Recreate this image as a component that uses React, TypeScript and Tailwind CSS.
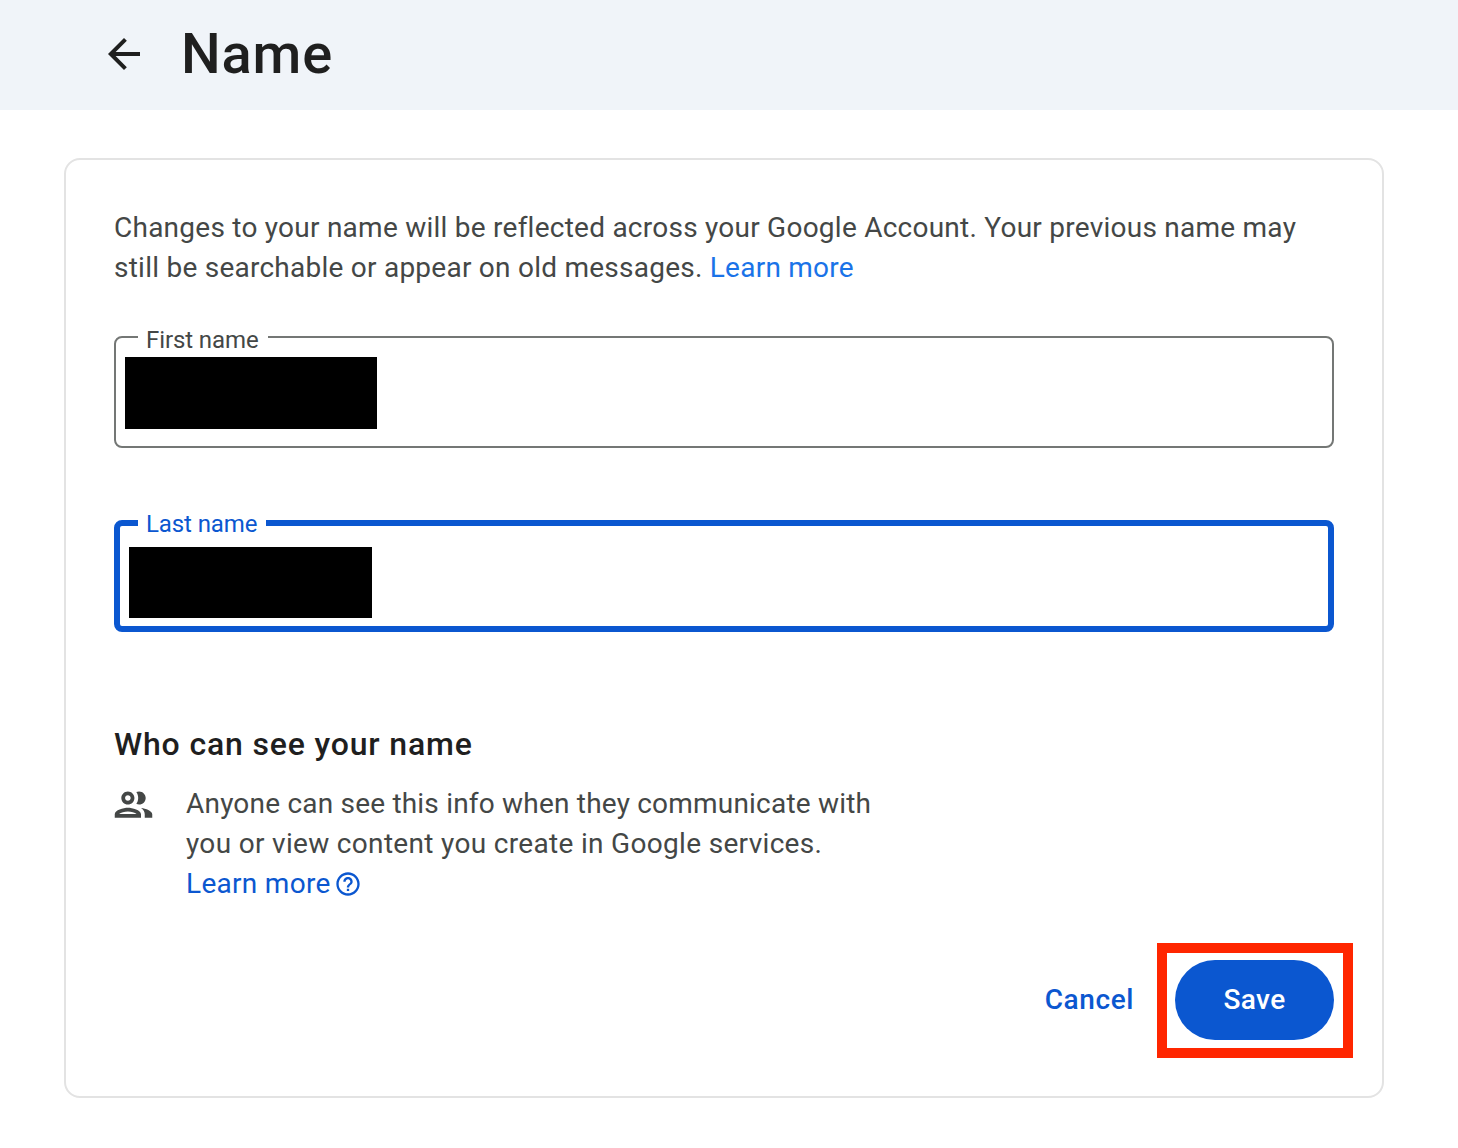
export default function App() {
  const font = { fontFamily: 'Roboto, "Noto Sans", sans-serif' };
  return (
    <div style={font} className="relative w-[1458px] h-[1148px] bg-white overflow-hidden">
      <header className="h-[110px] bg-[#f0f4f9] flex items-center pl-[100px] pr-8">
        <svg viewBox="0 0 24 24" className="w-12 h-12 -mt-[2px] fill-[#1f1f1f]">
          <path d="M20 11H7.83l5.59-5.59L12 4l-8 8 8 8 1.41-1.41L7.83 13H20v-2z" />
        </svg>
        <h1 className="ml-[33px] -mt-[2px] text-[56px] leading-[64px] font-medium text-[#1f1f1f] tracking-[0.85px]">Name</h1>
      </header>

      <main className="mt-12 ml-16 w-[1320px] h-[940px] border-2 border-[#e3e3e3] rounded-[16px] pt-[48px] px-12">
        <p className="text-[28px] leading-10 text-[#444746] tracking-[0.245px]">
          Changes to your name will be reflected across your Google Account. Your previous name may
          <br />
          still be searchable or appear on old messages. <span className="text-[#1a73e8]">Learn more</span>
        </p>

        <div className="relative mt-[48px] h-[112px] border-2 border-[#747775] rounded-lg pt-[19px] pl-[9px]">
          <span className="absolute left-[22px] -top-[12px] pl-2 pr-[9px] bg-white text-[24px] leading-7 text-[#444746] tracking-[-0.1px]">First name</span>
          <div className="w-[252px] h-[72px] bg-black" />
        </div>

        <div className="relative mt-[72px] h-[112px] border-[6px] border-[#0b57d0] rounded-lg pt-[21px] pl-[9px]">
          <span className="absolute left-[18px] -top-[16px] pl-2 pr-[9px] bg-white text-[24px] leading-7 text-[#0b57d0] tracking-[-0.1px]">Last name</span>
          <div className="w-[243px] h-[71px] bg-black" />
        </div>

        <h2 className="mt-[92px] text-[32px] leading-10 font-medium text-[#1f1f1f] tracking-[0.83px]">Who can see your name</h2>

        <div className="mt-[20px] flex">
          <svg viewBox="0 0 24 24" className="w-[45px] h-[45px] -ml-[3px] -mt-[2px] shrink-0 fill-[#444746]">
            <path d="M9 13.75c-2.34 0-7 1.17-7 3.5V19h14v-1.75c0-2.33-4.66-3.5-7-3.5zM4.34 17c.84-.58 2.87-1.25 4.66-1.25s3.82.67 4.66 1.25H4.34zM9 12c1.93 0 3.5-1.57 3.5-3.5S10.93 5 9 5 5.5 6.57 5.5 8.5 7.07 12 9 12zm0-5c.83 0 1.5.67 1.5 1.5S9.83 10 9 10s-1.5-.67-1.5-1.5S8.17 7 9 7zm7.04 6.81c1.16.84 1.96 1.96 1.96 3.44V19h4v-1.75c0-2.02-3.5-3.17-5.96-3.44zM15 12c1.93 0 3.5-1.57 3.5-3.5S16.93 5 15 5c-.54 0-1.04.13-1.5.35.63.89 1 1.98 1 3.15s-.37 2.26-1 3.15c.46.22.96.35 1.5.35z" />
          </svg>
          <div className="ml-[30px] text-[28px] leading-10 text-[#444746]">
            <p className="tracking-[0.2px]">Anyone can see this info when they communicate with</p>
            <p className="tracking-[0.32px]">you or view content you create in Google services.</p>
            <p className="flex items-center text-[#0b57d0] tracking-[0.3px]">
              Learn more
              <svg viewBox="0 0 24 24" className="w-7 h-7 ml-[3px] fill-[#0b57d0]">
                <path d="M11 18h2v-2h-2v2zm1-16C6.48 2 2 6.48 2 12s4.48 10 10 10 10-4.48 10-10S17.52 2 12 2zm0 18c-4.41 0-8-3.59-8-8s3.59-8 8-8 8 3.59 8 8-3.59 8-8 8zm0-14c-2.21 0-4 1.79-4 4h2c0-1.1.9-2 2-2s2 .9 2 2c0 2-3 1.75-3 5h2c0-2.25 3-2.5 3-5 0-2.21-1.79-4-4-4z" />
              </svg>
            </p>
          </div>
        </div>

        <div className="mt-[56px] flex items-center justify-end">
          <span className="text-[28px] leading-10 font-medium text-[#0b57d0] tracking-[0.6px]">Cancel</span>
          <button className="ml-[41px] w-[159px] h-20 rounded-full bg-[#0b57d0] text-white text-[28px] font-medium tracking-[0.4px]">Save</button>
        </div>
      </main>

      <div className="absolute left-[1157px] top-[943px] w-[196px] h-[115px] border-[10px] border-[#ff2600]" />
    </div>
  );
}
